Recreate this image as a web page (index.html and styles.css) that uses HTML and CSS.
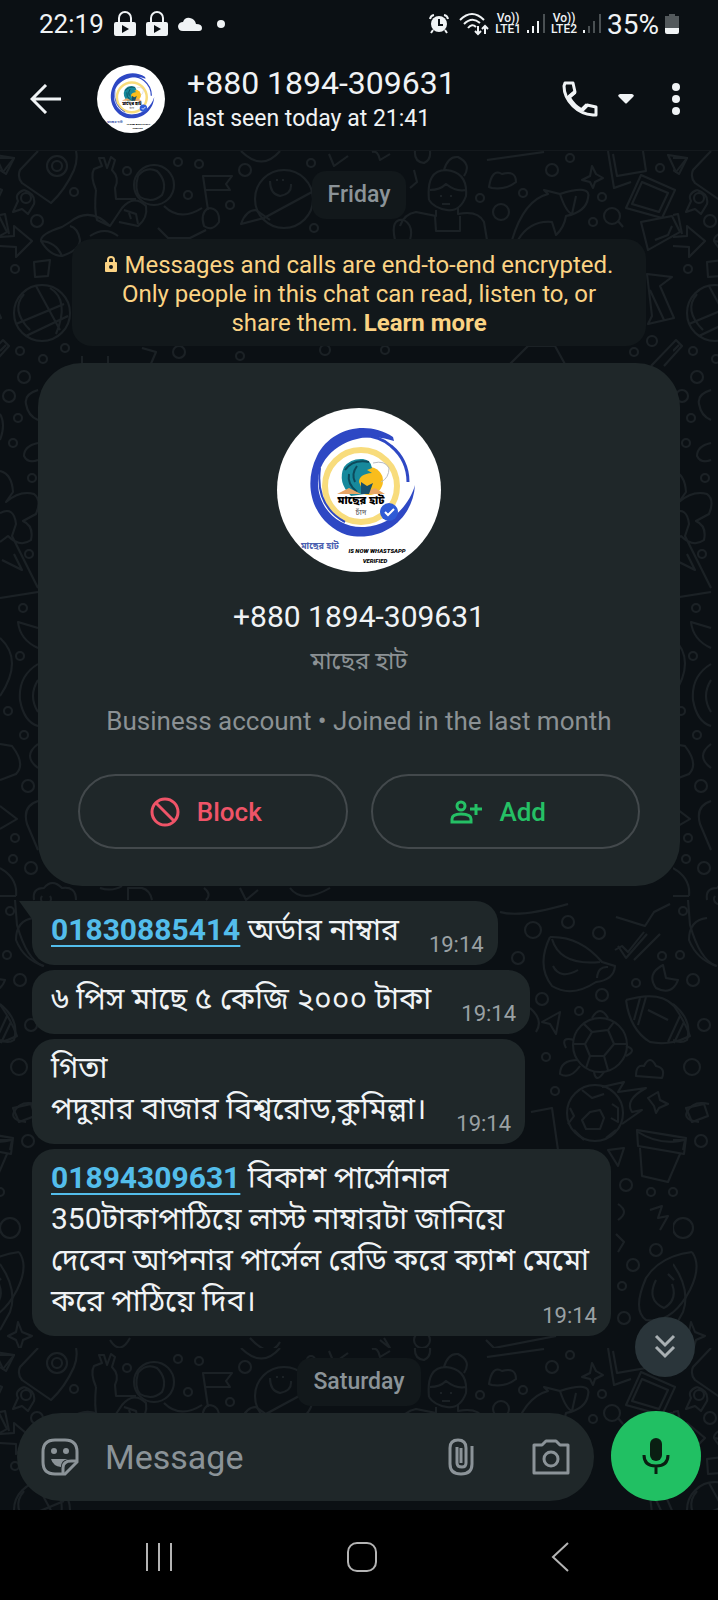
FILE: index.html
```html
<!DOCTYPE html>
<html lang="en">
<head>
    <meta charset="UTF-8">
    <meta name="viewport" content="width=device-width, initial-scale=1.0">
    <title>+880 1894-309631</title>
    <link rel="stylesheet" href="styles.css">
</head>
<body>
    <svg class="sprite" width="0" height="0" aria-hidden="true">
        <symbol id="logo" viewBox="0 0 164 164">
            <circle cx="82" cy="82" r="82" fill="#fff"/>
            <circle cx="84" cy="78" r="36" fill="#fff" stroke="#f8dc7c" stroke-width="6"/>
            <path d="M116 29C90 12 54 20 40 48C24 80 38 116 70 127C104 135 136 112 138 77C132 98 114 117 88 119C60 121 40 98 41 73C42 47 68 28 98 29Q108 30 117 33Z" fill="#2e48c4"/>
            <path d="M50 42C64 26 96 22 114 38C126 48 131 60 131 74" fill="none" stroke="#2e48c4" stroke-width="3"/>
            <path d="M43 60Q38 98 68 114" fill="none" stroke="#2e48c4" stroke-width="2"/>
            <circle cx="92" cy="73" r="14" fill="#f9bd1c"/>
            <path d="M74 88Q60 74 67 59Q74 50 86 51Q94 52 95 60L90 62L95 65Q82 66 82 74Q84 80 88 86Z" fill="#17899c"/>
            <path d="M68 62Q76 51 92 54M72 66Q70 76 80 84M80 58Q74 66 78 74" fill="none" stroke="#0c4a5c" stroke-width="2"/>
            <path d="M96 55Q108 52 112 60Q112 70 104 74" fill="none" stroke="#b8bcc4" stroke-width="1"/>
            <path d="M60 86L72 80L84 86L98 80L108 86Z" fill="#e8a565"/>
            <path d="M84 74L90 78L96 75L92 86H84Z" fill="#17506b"/>
            <text x="84" y="96" class="logo-name" text-anchor="middle">মাছের হাট</text>
            <text x="84" y="107" class="logo-sub" text-anchor="middle">চাঁদ</text>
            <circle cx="112" cy="104" r="9" fill="#2e5bd6"/>
            <path d="M108 104L111 107L117 101" fill="none" stroke="#fff" stroke-width="2"/>
            <text x="24" y="141" class="logo-tag">মাছের হাট</text>
            <text x="100" y="145" class="logo-note" text-anchor="middle">IS NOW WHASTSAPP</text>
            <text x="98" y="155" class="logo-note" text-anchor="middle">VERIFIED</text>
        </symbol>
        <symbol id="vpn" viewBox="0 0 22 26">
            <path d="M5 12V7A6 6 0 0 1 17 7V12" fill="none" stroke="currentColor" stroke-width="2"/>
            <path fill-rule="evenodd" d="M2 11H20Q22 11 22 13V23Q22 25 20 25H2Q0 25 0 23V13Q0 11 2 11ZM8 14V22L15 18Z" fill="currentColor"/>
        </symbol>
    </svg>

    <div class="phone">
        <div class="status-bar">
            <div class="status-left">
                <span>22:19</span>
                <svg width="22" height="26"><use href="#vpn"/></svg>
                <svg width="22" height="26"><use href="#vpn"/></svg>
                <svg width="24" height="14" viewBox="0 0 24 14"><path d="M5 14Q0 14 0 9Q1 5 5 5Q7 0 12 1Q17 2 18 7Q24 7 24 11Q24 14 21 14Z" fill="currentColor"/></svg>
                <span class="dot"></span>
            </div>
            <div class="status-right">
                <svg width="20" height="20" viewBox="0 0 20 20"><path d="M1 5A5 5 0 0 1 5 1M15 1A5 5 0 0 1 19 5M4 16L2 19M16 16L18 19" fill="none" stroke="currentColor" stroke-width="2"/><circle cx="10" cy="10" r="8" fill="currentColor"/><path d="M10 5V11H14" fill="none" stroke="#0b1014" stroke-width="2"/></svg>
                <svg class="wifi" width="30" height="24" viewBox="0 0 30 24"><path d="M1 8Q13 -4 25 8M5 12Q13 4 21 11M9 16Q13 11 17 15" fill="none" stroke="currentColor" stroke-width="2"/><path d="M19 14V22M16 19L19 22L22 19M26 22V14M23 17L26 14L29 17" fill="none" stroke="currentColor" stroke-width="2"/></svg>
                <span class="lte"><span>Vo))</span><span>LTE1</span></span>
                <svg width="18" height="20" viewBox="0 0 18 20"><path d="M1 16V19M6 12V19M11 7V19" stroke="currentColor" stroke-width="2"/><path d="M17 0V19" stroke="#4a5053" stroke-width="2"/></svg>
                <span class="lte"><span>Vo))</span><span>LTE2</span></span>
                <svg width="18" height="20" viewBox="0 0 18 20"><path d="M1 16V19" stroke="currentColor" stroke-width="2"/><path d="M6 12V19M11 7V19M17 0V19" stroke="#4a5053" stroke-width="2"/></svg>
                <span class="percent">35%</span>
                <svg width="14" height="20" viewBox="0 0 14 20"><path d="M4 0H10V2H14V14H0V2H4Z" fill="#53595c"/><path d="M0 14H14V18Q14 20 12 20H2Q0 20 0 18Z" fill="currentColor"/></svg>
            </div>
        </div>

        <header class="chat-header">
            <button class="icon-btn" aria-label="Back">
                <svg width="32" height="30" viewBox="0 0 32 30"><path d="M16 1L2 15L16 29M2 15H31" fill="none" stroke="currentColor" stroke-width="3"/></svg>
            </button>
            <svg class="avatar-small" viewBox="0 0 164 164" role="img" aria-label="Profile photo"><use href="#logo"/></svg>
            <div class="contact">
                <h1>+880 1894-309631</h1>
                <p>last seen today at 21:41</p>
            </div>
            <button class="icon-btn call" aria-label="Call">
                <svg width="36" height="36" viewBox="0 0 36 36"><path d="M3 2H11L13 11L7 16Q12 25 20 29L25 24L34 26V34H31Q19 33 11 25Q2 16 2 5Z" fill="none" stroke="currentColor" stroke-width="3" stroke-linejoin="round"/><path d="M7 16L13 11M20 29L25 24" fill="none" stroke="currentColor" stroke-width="4"/></svg>
                <svg width="16" height="10" viewBox="0 0 16 10"><path d="M2 0H14Q17 1 15 3L9 9Q8 10 7 9L1 3Q-1 1 2 0Z" fill="currentColor"/></svg>
            </button>
            <button class="icon-btn" aria-label="More options">
                <svg width="8" height="32" viewBox="0 0 8 32"><g fill="currentColor"><circle cx="4" cy="4" r="4"/><circle cx="4" cy="16" r="4"/><circle cx="4" cy="28" r="4"/></g></svg>
            </button>
        </header>

        <main class="chat">
            <svg class="wallpaper" width="100%" height="100%" aria-hidden="true">
                <defs>
                    <g id="doodle-set" fill="none" stroke="#1b2125" stroke-width="2" stroke-linejoin="round">
                        <!-- rocket, hand, astronaut -->
                        <path d="M38 151L20 170Q17 177 22 183L51 203Q65 190 74 170Q78 160 76 151M24 190Q14 194 18 201L13 212L22 209L28 214L34 204Q36 194 24 190"/>
                        <circle cx="57" cy="166" r="10"/><circle cx="57" cy="166" r="5"/><circle cx="26" cy="198" r="5"/>
                        <path d="M0 158H14L6 174L0 170M0 215L5 214L9 234M0 237L14 236V226L32 241L16 257V247L0 246"/>
                        <path d="M96 190Q90 176 94 169L102 166L99 158L104 158L107 168L111 157L115 160L112 170Q120 178 115 188L116 199H136M96 190Q94 210 97 220L110 226L122 208Q134 194 146 206Q148 218 138 226L119 222M110 226Q90 206 70 222L62 227Q40 234 41 241Q50 256 62 256Q80 250 80 240Q78 228 70 226M41 241Q56 242 62 256"/>
                        <circle cx="154" cy="185" r="20"/><path d="M140 197Q134 190 138 176Q146 166 157 171Q168 182 162 195Q152 204 140 197M124 210L136 214L138 224M129 213L131 219M164 206Q180 222 202 208M158 228L168 238H190L206 230M90 236Q105 226 118 236"/>
                        <!-- flag, planet -->
                        <path d="M208 210L203 176H232L226 184L230 190H205M208 208Q200 214 204 226Q212 232 219 222Q220 208 208 208"/>
                        <circle cx="284" cy="199" r="29"/><path d="M270 181Q270 194 280 196Q292 194 291 184M276 180H278M282 180H284M312 192L264 218L241 224Q246 210 256 210L270 220M241 151Q262 172 280 151M329 154L334 166L348 156"/>
                        <!-- waitress -->
                        <path d="M429 200Q426 170 446 170Q468 172 466 196Q460 212 447 210Q434 208 429 200M430 190Q440 190 446 184Q456 192 466 190M444 170Q448 156 458 157Q472 164 464 176M440 196H442M450 196H452M442 204H450M436 210V216L416 212Q404 214 400 226M458 208V214Q478 210 484 222L487 240M435 216L436 231H460V216M395 240Q390 218 404 220Q414 226 410 240M414 170L417 182L410 188M372 152Q378 150 380 160L390 154M415 151Q414 162 424 163Q431 160 430 151"/>
                        <!-- whale, cloud, photos -->
                        <path d="M489 187Q492 168 502 174Q516 170 516 182Q506 190 492 188ZM487 160L544 152M512 240Q524 200 548 194L544 190L560 194Q592 184 588 198Q586 212 566 216Q564 228 556 235L552 222Q530 220 518 240M560 194Q566 212 572 214L576 196"/>
                        <path d="M582 180L590 176L592 166L596 174L603 178L595 182L593 188L590 182ZM608 151L614 188L631 182M613 154L617 176L646 171L643 151M641 175L675 190L662 218L626 208ZM642 182L668 193L659 212L632 204ZM641 222L672 216L680 232L648 250ZM655 240L668 235L672 226"/>
                        <circle cx="612" cy="216" r="8"/><path d="M618 221L623 227M668 155L687 158L676 172Z"/>
                        <!-- globe -->
                        <circle cx="42" cy="313" r="28"/><path d="M24 294Q10 310 30 330M36 286L60 330M16 324L64 304M26 336L68 316M50 288Q70 300 56 334M34 262L50 260L48 276L35 277Z"/>
                        <path d="M647 274L672 277L660 286L674 318L648 324L652 316ZM650 290L664 320M0 351L6 345M82 356V366M108 356V366M142 348L156 352L150 366M508 366L528 346H555L566 366M651 366L676 340L682 346L664 366"/>
                        <!-- left and right edges -->
                        <path d="M38 390Q24 394 26 404Q28 416 38 420M38 443Q24 446 24 456Q28 464 38 460M0 471Q12 474 13 492L6 502Q20 490 34 494Q42 500 36 514L23 521Q34 526 31 540Q20 548 8 536L0 542M0 513Q14 506 16 524L12 536L38 588M14 554L22 570L2 560M0 598L38 592M0 414Q6 424 0 440M0 638Q24 660 0 696M38 628L18 622Q20 640 38 648M38 664Q18 676 20 700Q24 722 38 726M38 680Q28 696 38 712M38 744Q22 756 38 768M0 744L12 746Q26 764 16 774L0 780M38 801Q22 806 27 824L38 850M0 806L17 819L0 829M0 868Q18 878 16 896M0 896H16"/>
                        <path d="M34 900Q32 888 44 888Q52 878 62 888Q76 886 76 900M42 896A5 5 0 1 0 50 896M100 888Q112 892 122 886M128 900V888H142Q150 890 152 900M204 888Q212 894 206 900M240 888L246 900L258 890M290 888Q302 904 330 888"/>
                        <path d="M34 918Q16 920 16 940Q24 960 44 966M0 1004Q20 1020 14 1040Q8 1044 0 1040M36 1104Q20 1100 14 1112Q10 1120 26 1122M0 1140H12L10 1150M0 1264Q18 1290 10 1312L0 1330M18 1322L22 1332L32 1336L23 1340L20 1350L16 1340L8 1336L16 1332Z"/>
                        <!-- cup, turtle, football, soccer ball, pot -->
                        <path d="M550 937Q580 936 602 962L615 966Q614 980 596 982Q572 998 552 986Q536 966 550 937M552 939Q560 966 600 962M597 978Q598 966 608 967M553 966Q560 980 578 970M500 912Q520 918 568 904M616 917L645 926L654 912L670 904M618 946L626 958L647 934M615 950L622 946L628 952L644 932M634 960L660 934M688 900L690 925Q700 960 716 966"/>
                        <path d="M663 965Q646 974 656 988Q672 996 678 980L666 978ZM626 1000Q660 990 674 1006Q684 1020 690 1036Q670 1046 650 1042Q630 1030 626 1000M640 998L634 1020M646 997L638 1025M680 1016L668 1042M684 1022L674 1043M648 1010L668 1020M542 1022L560 1012L556 1034L550 1024Z"/>
                        <circle cx="600" cy="1045" r="27"/><path d="M592 1032L608 1030L614 1044L604 1056L590 1056L585 1044ZM592 1032L584 1024M608 1030L614 1022M614 1044H627M604 1056L608 1070M590 1056L586 1068M585 1044H573M592 1018Q600 1004 608 1018M574 1040Q560 1036 566 1048M578 1060Q560 1060 560 1074Q570 1080 580 1066M594 1072Q596 1084 604 1072M626 1046Q638 1050 626 1056M636 1076Q636 1064 644 1066Q650 1054 656 1066Q666 1068 662 1078Z"/>
                        <circle cx="595" cy="1113" r="28"/><path d="M590 1112L600 1110L604 1118L600 1129H586L582 1120ZM582 1090L592 1098L604 1094M612 1104L618 1108V1122L611 1118M570 1108L574 1116L568 1124M574 1130L584 1140M606 1138L616 1130M602 1087L624 1082L618 1092L646 1088Q624 1100 632 1112L642 1110L622 1124"/>
                        <path d="M637 1130L686 1138L684 1154L638 1146ZM638 1132Q660 1146 684 1140M640 1148L642 1176L668 1182L680 1154M531 1112L552 1108L558 1150M530 1008Q544 1020 536 1032M608 1150L624 1148L618 1166ZM648 1098L658 1092L660 1100L668 1104L659 1108L656 1113L654 1106ZM686 1108L704 1104L708 1116L692 1122Z"/>
                        <path d="M650 1210L662 1206L658 1218L668 1216L660 1230M618 1204Q630 1212 618 1220M616 1234L624 1242L618 1252M692 1252Q660 1256 646 1278Q632 1310 646 1320Q672 1324 690 1290Q702 1266 692 1252M656 1280Q646 1300 664 1308Q678 1300 672 1284M668 1274L674 1280"/>
                        <path d="M110 1340Q120 1356 130 1338M250 1338Q270 1360 280 1342M380 1340L390 1348L384 1338M486 1340L494 1348L556 1336"/>
                        <!-- dots between the drawings -->
                        <circle cx="178" cy="162" r="4"/><circle cx="199" cy="164" r="4"/><circle cx="127" cy="171" r="4"/><circle cx="74" cy="192" r="4"/>
                        <circle cx="188" cy="195" r="4"/><circle cx="230" cy="205" r="4"/><circle cx="245" cy="170" r="6"/><circle cx="311" cy="163" r="4"/>
                        <circle cx="314" cy="228" r="4"/><circle cx="37" cy="221" r="6"/><circle cx="15" cy="269" r="4"/><circle cx="20" cy="351" r="4"/>
                        <circle cx="65" cy="348" r="4"/><circle cx="43" cy="359" r="4"/><circle cx="179" cy="352" r="6"/><circle cx="552" cy="170" r="6"/>
                        <circle cx="570" cy="158" r="4"/><circle cx="523" cy="193" r="4"/><circle cx="480" cy="198" r="4"/><circle cx="501" cy="212" r="8"/>
                        <circle cx="602" cy="197" r="4"/><circle cx="660" cy="168" r="4"/><circle cx="593" cy="222" r="4"/><circle cx="652" cy="341" r="5"/>
                        <circle cx="634" cy="352" r="4"/><circle cx="385" cy="350" r="4"/><circle cx="240" cy="356" r="4"/><circle cx="325" cy="350" r="5"/>
                        <circle cx="24" cy="377" r="6"/><circle cx="9" cy="396" r="6"/><circle cx="18" cy="418" r="4"/><circle cx="13" cy="443" r="4"/>
                        <circle cx="32" cy="478" r="4"/><circle cx="29" cy="554" r="4"/><circle cx="23" cy="608" r="4"/><circle cx="20" cy="656" r="4"/>
                        <circle cx="8" cy="711" r="4"/><circle cx="24" cy="735" r="4"/><circle cx="28" cy="786" r="6"/><circle cx="15" cy="838" r="4"/>
                        <circle cx="13" cy="859" r="4"/><circle cx="31" cy="868" r="6"/><circle cx="10" cy="911" r="4"/><circle cx="7" cy="955" r="4"/>
                        <circle cx="20" cy="980" r="6"/><circle cx="31" cy="1025" r="6"/><circle cx="19" cy="1067" r="8"/><circle cx="28" cy="1141" r="6"/>
                        <circle cx="568" cy="922" r="6"/><circle cx="599" cy="933" r="6"/><circle cx="533" cy="930" r="8"/><circle cx="518" cy="958" r="6"/>
                        <circle cx="636" cy="983" r="4"/><circle cx="602" cy="995" r="6"/><circle cx="542" cy="999" r="6"/><circle cx="579" cy="1011" r="4"/>
                        <circle cx="546" cy="1057" r="4"/><circle cx="555" cy="1091" r="4"/><circle cx="662" cy="956" r="4"/><circle cx="626" cy="1185" r="6"/>
                        <circle cx="651" cy="1192" r="4"/><circle cx="673" cy="1192" r="4"/><circle cx="656" cy="1250" r="6"/><circle cx="633" cy="1265" r="6"/>
                        <circle cx="624" cy="1318" r="6"/><circle cx="622" cy="1286" r="4"/><circle cx="10" cy="1228" r="10"/><circle cx="422" cy="1340" r="8"/>
                    </g>
                    <pattern id="doodles" width="673" height="1197" patternUnits="userSpaceOnUse">
                        <use href="#doodle-set" x="0" y="-151"/>
                        <use href="#doodle-set" x="-673" y="-151"/>
                    </pattern>
                </defs>
                <rect width="100%" height="100%" fill="url(#doodles)"/>
            </svg>

            <div class="thread">
                <div class="date-chip">Friday</div>

                <div class="notice">
                    <svg width="12" height="17" viewBox="0 0 12 17"><path d="M3 7V4A3 3 0 0 1 9 4V7" fill="none" stroke="currentColor" stroke-width="2"/><path fill-rule="evenodd" d="M1 6H11Q12 6 12 7V15Q12 16 11 16H1Q0 16 0 15V7Q0 6 1 6ZM6 9A2 2 0 1 0 6 13A2 2 0 1 0 6 9Z" fill="currentColor"/></svg>
                    Messages and calls are end-to-end encrypted. Only people in this chat can read, listen to, or share them. <a href="#">Learn more</a>
                </div>

                <section class="profile-card">
                    <svg class="avatar-large" viewBox="0 0 164 164" role="img" aria-label="Profile photo"><use href="#logo"/></svg>
                    <h2>+880 1894-309631</h2>
                    <p class="business-name" lang="bn">মাছের হাট</p>
                    <p class="business-info">Business account • Joined in the last month</p>
                    <div class="card-actions">
                        <button class="pill block">
                            <svg width="30" height="30" viewBox="0 0 30 30"><circle cx="15" cy="15" r="13" fill="none" stroke="currentColor" stroke-width="3"/><path d="M6 6L24 24" stroke="currentColor" stroke-width="3"/></svg>
                            Block
                        </button>
                        <button class="pill add">
                            <svg width="32" height="24" viewBox="0 0 32 24"><circle cx="11" cy="6" r="4" fill="none" stroke="currentColor" stroke-width="3"/><path d="M2 22V19Q2 14 11 14Q21 14 21 19V22ZM26 4V15M20 9H32" fill="none" stroke="currentColor" stroke-width="3"/></svg>
                            Add
                        </button>
                    </div>
                </section>

                <div class="messages" lang="bn">
                    <div class="bubble first"><a href="tel:01830885414">01830885414</a> অর্ডার নাম্বার<time>19:14</time></div>
                    <div class="bubble">৬ পিস মাছে ৫ কেজি ২০০০ টাকা<time>19:14</time></div>
                    <div class="bubble">গিতা<br>পদুয়ার বাজার বিশ্বরোড,কুমিল্লা।<time>19:14</time></div>
                    <div class="bubble"><a href="tel:01894309631">01894309631</a> বিকাশ পার্সোনাল<br>350টাকাপাঠিয়ে লাস্ট নাম্বারটা জানিয়ে<br>দেবেন আপনার পার্সেল রেডি করে ক্যাশ মেমো<br>করে পাঠিয়ে দিব।<time>19:14</time></div>
                </div>

                <div class="date-chip">Saturday</div>
            </div>

            <form class="composer">
                <button class="scroll-down" type="button" aria-label="Scroll to latest">
                    <svg width="22" height="26" viewBox="0 0 22 26"><path d="M2 2L11 11L20 2M2 13L11 22L20 13" fill="none" stroke="currentColor" stroke-width="3"/></svg>
                </button>
                <div class="input-box">
                    <button class="icon-btn" type="button" aria-label="Stickers">
                        <svg width="38" height="38" viewBox="0 0 38 38"><path d="M14 2H24Q36 2 36 14V24L24 36H14Q2 36 2 24V14Q2 2 14 2Z" fill="none" stroke="currentColor" stroke-width="3"/><path d="M22 36V30Q22 23 30 23H36" fill="none" stroke="currentColor" stroke-width="3"/><circle cx="13" cy="13" r="3" fill="currentColor"/><circle cx="25" cy="13" r="3" fill="currentColor"/><path d="M10 21H27Q20 22 20 29Q12 28 10 21Z" fill="currentColor"/></svg>
                    </button>
                    <input type="text" placeholder="Message" aria-label="Message">
                    <button class="icon-btn attach" type="button" aria-label="Attach">
                        <svg width="26" height="38" viewBox="0 0 26 38"><path d="M24 8V26Q24 36 13 36Q2 36 2 26V10Q2 2 10 2Q18 2 18 10V25Q18 29 14 29Q9 29 9 25V9M13 10V25" fill="none" stroke="currentColor" stroke-width="3"/></svg>
                    </button>
                    <button class="icon-btn" type="button" aria-label="Camera">
                        <svg width="38" height="36" viewBox="0 0 38 36"><path d="M2 6H10L14 2H24L28 6H36V34H2Z" fill="none" stroke="currentColor" stroke-width="3" stroke-linejoin="round"/><circle cx="19" cy="20" r="7" fill="none" stroke="currentColor" stroke-width="3"/></svg>
                    </button>
                </div>
                <button class="mic" type="button" aria-label="Record voice message">
                    <svg width="28" height="36" viewBox="0 0 28 36"><rect x="8" y="0" width="12" height="23" rx="6" fill="currentColor"/><path d="M2 17Q2 28 14 28Q26 28 26 17M14 28V36" fill="none" stroke="currentColor" stroke-width="3"/></svg>
                </button>
            </form>
        </main>

        <nav class="system-nav">
            <button aria-label="Recents"><svg width="28" height="30" viewBox="0 0 28 30"><path d="M2 1V29M14 1V29M26 1V29" stroke="currentColor" stroke-width="2"/></svg></button>
            <button aria-label="Home"><svg width="30" height="30" viewBox="0 0 30 30"><rect x="1" y="1" width="28" height="28" rx="9" fill="none" stroke="currentColor" stroke-width="2"/></svg></button>
            <button aria-label="Back"><svg width="18" height="30" viewBox="0 0 18 30"><path d="M17 1L2 15L17 29" fill="none" stroke="currentColor" stroke-width="2"/></svg></button>
        </nav>
    </div>
</body>
</html>
```
FILE: styles.css
```css
* {
    margin: 0;
    padding: 0;
    box-sizing: border-box;
}

body {
    background-color: #0b1014;
    color: #f0f3f5;
    font-family: Roboto, 'Noto Sans Bengali', sans-serif;
}

button {
    background: none;
    border: none;
    color: inherit;
    font-family: inherit;
    cursor: pointer;
}

svg {
    display: block;
    flex-shrink: 0;
}

.sprite {
    position: absolute;
}

.logo-name {
    font-size: 11px;
    font-weight: 900;
}

.logo-sub {
    font-size: 8px;
    fill: #555;
}

.logo-tag {
    font-size: 9px;
    font-weight: bold;
    fill: #4b5fb0;
}

.logo-note {
    font-size: 6px;
    font-weight: 900;
    font-style: italic;
}

.phone {
    display: flex;
    flex-direction: column;
    min-height: 100vh;
}

/* Status bar */
.status-bar {
    display: flex;
    justify-content: space-between;
    align-items: center;
    height: 48px;
    padding: 0 39px;
    font-size: 26px;
}

.status-left,
.status-right {
    display: flex;
    align-items: center;
    gap: 10px;
}

.status-right {
    gap: 6px;
}

.dot {
    width: 8px;
    height: 8px;
    margin-left: 5px;
    border-radius: 50%;
    background-color: currentColor;
}

.wifi {
    margin-left: 4px;
}

.lte {
    display: flex;
    flex-direction: column;
    align-items: center;
    font-size: 12px;
    font-weight: 500;
    line-height: 11px;
}

.percent {
    font-size: 28px;
}

/* Header */
.chat-header {
    display: flex;
    align-items: center;
    height: 103px;
    padding: 0 38px 0 30px;
    border-bottom: 1px solid #14191d;
}

.icon-btn {
    display: flex;
    align-items: center;
}

.avatar-small {
    width: 68px;
    height: 68px;
    margin: 0 22px 0 35px;
}

.contact {
    flex: 1;
    padding-top: 4px;
}

.contact h1 {
    font-size: 32px;
    font-weight: 400;
    line-height: 36px;
}

.contact p {
    font-size: 23px;
    line-height: 36px;
}

.call {
    gap: 20px;
    margin-right: 38px;
}

/* Chat */
.chat {
    position: relative;
    display: flex;
    flex-direction: column;
    flex: 1;
}

.wallpaper {
    position: absolute;
    inset: 0;
}

.thread {
    position: relative;
    flex: 1;
    padding: 20px 38px 0;
}

.date-chip {
    width: fit-content;
    margin: 0 auto;
    padding: 0 16px;
    border-radius: 14px;
    background-color: #12181b;
    color: #8b9398;
    font-size: 23px;
    font-weight: 500;
    line-height: 48px;
}

.notice {
    max-width: 574px;
    margin: 20px auto 17px;
    padding: 12px 28px 8px;
    border-radius: 20px;
    background-color: #12181b;
    color: #fbd384;
    font-size: 24px;
    line-height: 29px;
    text-align: center;
}

.notice svg {
    display: inline-block;
    margin-right: 2px;
}

.notice a {
    color: inherit;
    font-weight: 700;
    text-decoration: none;
}

.profile-card {
    padding: 45px 40px 37px;
    border-radius: 44px;
    background-color: #1f2729;
    text-align: center;
}

.avatar-large {
    width: 164px;
    height: 164px;
    margin: 0 auto 25px;
}

.profile-card h2 {
    font-size: 30px;
    font-weight: 400;
    line-height: 40px;
}

.business-name,
.business-info {
    color: #8b9194;
    font-size: 24px;
    line-height: 48px;
}

.business-info {
    font-size: 26px;
    margin: 12px 0 29px;
}

.card-actions {
    display: flex;
    gap: 23px;
}

.pill {
    display: flex;
    flex: 1;
    align-items: center;
    justify-content: center;
    gap: 17px;
    height: 75px;
    padding-right: 14px;
    border: 2px solid #43494c;
    border-radius: 38px;
    font-size: 26px;
    font-weight: 500;
}

.block {
    color: #ef5468;
}

.add {
    color: #25c065;
}

.messages {
    display: flex;
    flex-direction: column;
    align-items: flex-start;
    gap: 5px;
    margin: 15px -6px 22px;
}

.bubble {
    position: relative;
    display: flow-root;
    padding: 8px 22px 8px 19px;
    border-radius: 22px;
    background-color: #1f2729;
    font-size: 30px;
    line-height: 41px;
}

.bubble.first {
    border-top-left-radius: 0;
}

/* little tail on the first bubble of a group */
.bubble.first::before {
    content: '';
    position: absolute;
    top: 0;
    left: -13px;
    border-top: 18px solid #1f2729;
    border-left: 13px solid transparent;
}

.bubble a {
    color: #53bdeb;
    font-weight: 700;
    text-decoration-thickness: 2px;
    text-underline-offset: 5px;
}

/* sits closer to the bubble edge than the text does */
.bubble time {
    float: right;
    margin: 24px -8px 0 30px;
    color: #9aa1a4;
    font-size: 22px;
    line-height: 24px;
}

/* Composer */
.composer {
    position: relative;
    display: flex;
    align-items: flex-end;
    gap: 17px;
    padding: 5px 17px 9px;
}

.scroll-down {
    position: absolute;
    right: 23px;
    bottom: 133px;
    display: flex;
    align-items: center;
    justify-content: center;
    width: 60px;
    height: 60px;
    border-radius: 50%;
    background-color: #2a353a;
    color: #a9b0b3;
}

.input-box {
    display: flex;
    flex: 1;
    align-items: center;
    min-width: 0;
    height: 88px;
    padding: 0 24px;
    border-radius: 44px;
    background-color: #1f2729;
    color: #8b9398;
}

.input-box input {
    flex: 1;
    min-width: 0;
    margin: 0 26px;
    border: none;
    outline: none;
    background: none;
    color: #f0f3f5;
    font-family: inherit;
    font-size: 34px;
}

.input-box input::placeholder {
    color: #8b9398;
    opacity: 1;
}

.attach {
    margin-right: 58px;
}

.mic {
    display: flex;
    flex-shrink: 0;
    align-items: center;
    justify-content: center;
    width: 90px;
    height: 90px;
    border-radius: 50%;
    background-color: #21c063;
    color: #0a1f12;
}

/* Android navigation */
.system-nav {
    display: flex;
    align-items: center;
    justify-content: space-around;
    height: 90px;
    padding: 4px 62px 0 58px;
    background-color: #000;
    color: #b4b4b4;
}

.system-nav button {
    display: flex;
}
```
